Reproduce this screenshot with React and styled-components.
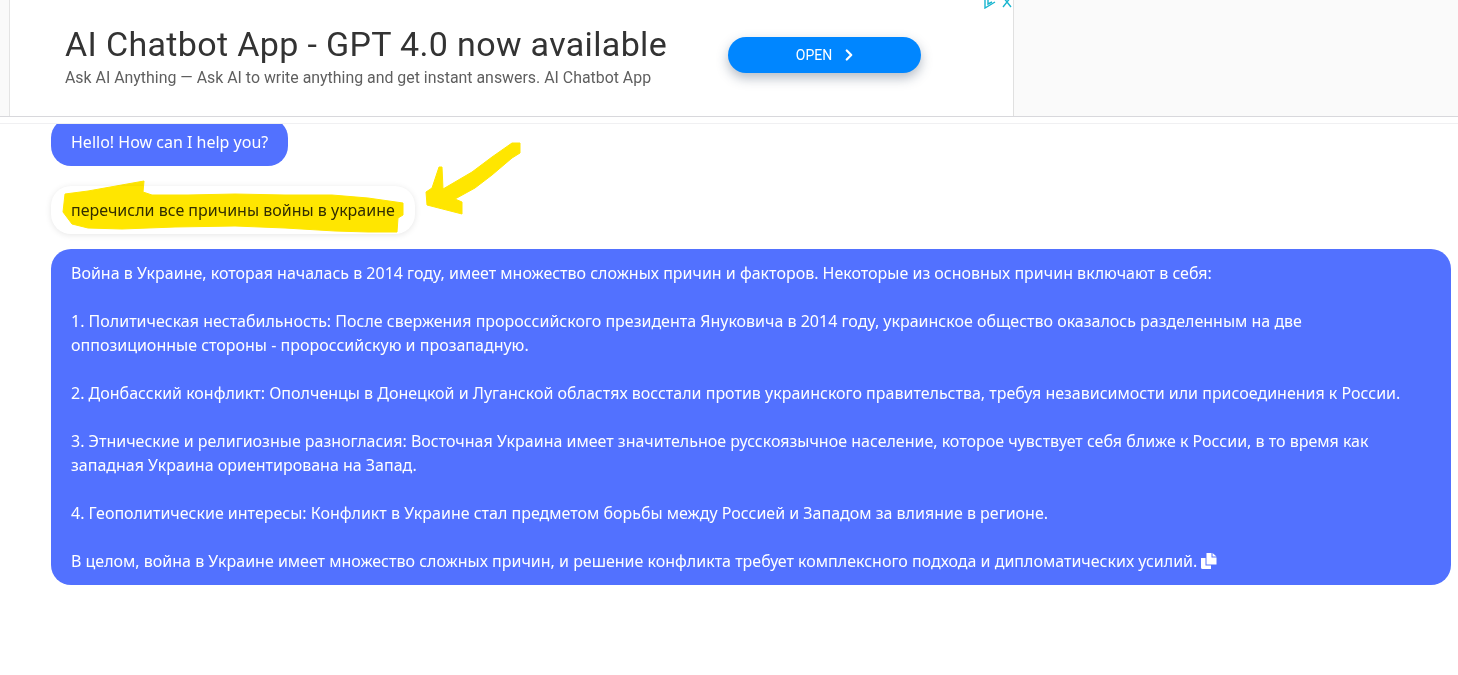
import styled, { createGlobalStyle } from "styled-components";
import { ChevronRight } from "lucide-react";

const answer = [
  "Война в Украине, которая началась в 2014 году, имеет множество сложных причин и факторов. Некоторые из основных причин включают в себя:",
  "",
  "1. Политическая нестабильность: После свержения пророссийского президента Януковича в 2014 году, украинское общество оказалось разделенным на две оппозиционные стороны - пророссийскую и прозападную.",
  "",
  "2. Донбасский конфликт: Ополченцы в Донецкой и Луганской областях восстали против украинского правительства, требуя независимости или присоединения к России.",
  "",
  "3. Этнические и религиозные разногласия: Восточная Украина имеет значительное русскоязычное население, которое чувствует себя ближе к России, в то время как западная Украина ориентирована на Запад.",
  "",
  "4. Геополитические интересы: Конфликт в Украине стал предметом борьбы между Россией и Западом за влияние в регионе.",
  "",
  "В целом, война в Украине имеет множество сложных причин, и решение конфликта требует комплексного подхода и дипломатических усилий. ",
].join("\n");

function App() {
  return (
    <Page>
      <GlobalStyle />
      <AdBar>
        <Ad>
          <AdText>
            <AdTitle>AI Chatbot App - GPT 4.0 now available</AdTitle>
            <AdSubtitle>Ask AI Anything — Ask AI to write anything and get instant answers. AI Chatbot App</AdSubtitle>
          </AdText>
          <OpenButton>
            OPEN
            <ChevronRight size={18} strokeWidth={3} />
          </OpenButton>
          <AdChoices width="30" height="9" viewBox="0 0 30 9" fill="none" stroke="#19b5cf" strokeWidth="1.4">
            <path d="M2 -2V8L12 2" />
            <path d="M5 -1V4L9 2" />
            <path d="M20 -3L28 7M28 -3L20 7" />
          </AdChoices>
        </Ad>
      </AdBar>
      <AdGap />
      <Chat>
        <Bubble $first>Hello! How can I help you?</Bubble>
        <Bubble $user>перечисли все причины войны в украине</Bubble>
        <Bubble $wide>
          {answer}
          <CopyIcon width="16" height="16" viewBox="0 0 16 16" fill="#fff">
            <path d="M5.5 0H10.5V4.5H15.5V11.5H5.5Z" />
            <path d="M11.5 0L15.5 3.5H11.5Z" />
            <path d="M0 5H4.5V12.5H10V16H1.5Q0 16 0 14.5Z" />
          </CopyIcon>
        </Bubble>
      </Chat>
      <Marker width="1458" height="675" viewBox="0 0 1458 675">
        <path
          fill="#ffe600"
          stroke="#ffe600"
          strokeLinejoin="round"
          d="M65 194L88 191L144 181L143 192L152 195L188 195L235 194L285 195L332 195L368 198L403 203L403 215L398 218L397 232L368 232L335 231L285 228L235 226L175 227L122 229L88 228L72 224L63 212Z"
        />
        <path
          fill="#ffe600"
          stroke="#ffe600"
          strokeLinejoin="round"
          d="M520 143L520 153L512 158L492 175L475 188L455 199L462 202L462 214L427 205L426 192L432 188L439 167L442 167L443 189L472 172L492 157L512 143Z"
        />
      </Marker>
    </Page>
  );
}

export default App;

// Styled Components
const GlobalStyle = createGlobalStyle`
  html, body {
    margin: 0;
    background: #fff;
  }
`;

const Page = styled.div`
  position: relative;
  height: 675px;
  overflow: hidden;
  background: #fff;
  font-family: "Noto Sans", sans-serif;
`;

const AdBar = styled.div`
  height: 116px;
  padding-left: 9px;
  background: #fafafa;
  border-bottom: 1px solid #d8d8dc;
`;

const Ad = styled.div`
  position: relative;
  display: flex;
  align-items: center;
  box-sizing: border-box;
  width: 1005px;
  height: 116px;
  padding-left: 55px;
  background: #fff;
  border-left: 1px solid #e4e4e4;
  border-right: 1px solid #e0e0e0;
`;

const AdText = styled.div`
  width: 663px;
  padding-bottom: 4px;
  font-family: Roboto, sans-serif;
`;

const AdTitle = styled.div`
  font-size: 34px;
  line-height: 42px;
  letter-spacing: 0.35px;
  color: #333;
`;

const AdSubtitle = styled.div`
  margin-top: 1px;
  font-size: 15.9px;
  line-height: 24px;
  color: #5f5f5f;
`;

const OpenButton = styled.div`
  display: flex;
  align-items: center;
  justify-content: center;
  gap: 8px;
  box-sizing: border-box;
  width: 193px;
  height: 36px;
  margin-bottom: 6px;
  padding-left: 5px;
  border-radius: 18px;
  background: #0086ff;
  box-shadow: 0 5px 12px rgba(40, 60, 90, 0.35);
  color: #fff;
  font-family: Roboto, sans-serif;
  font-size: 14px;
`;

const AdChoices = styled.svg`
  position: absolute;
  top: 0;
  right: 0;
`;

const AdGap = styled.div`
  height: 6px;
  border-bottom: 1px solid #f0f0f2;
`;

const Chat = styled.div`
  display: flex;
  flex-direction: column;
  align-items: flex-start;
  overflow: hidden;
  padding-left: 51px;
`;

const Bubble = styled.div`
  box-sizing: border-box;
  width: ${(p) => (p.$wide ? "1400px" : "auto")};
  margin-top: ${(p) => (p.$first ? "-6px" : p.$wide ? "15px" : "20px")};
  padding: ${(p) => (p.$wide ? "12px 45px 12px 20px" : "12px 20px")};
  border-radius: 20px;
  background: ${(p) => (p.$user ? "#fff" : "#5271ff")};
  box-shadow: ${(p) => (p.$user ? "0 1px 6px rgba(0, 0, 0, 0.1)" : "none")};
  color: ${(p) => (p.$user ? "#333" : "#fff")};
  font-size: 16px;
  line-height: 24px;
  white-space: pre-line;
`;

const CopyIcon = styled.svg`
  vertical-align: -2px;
`;

const Marker = styled.svg`
  position: absolute;
  top: 0;
  left: 0;
  mix-blend-mode: multiply;
  pointer-events: none;
`;
